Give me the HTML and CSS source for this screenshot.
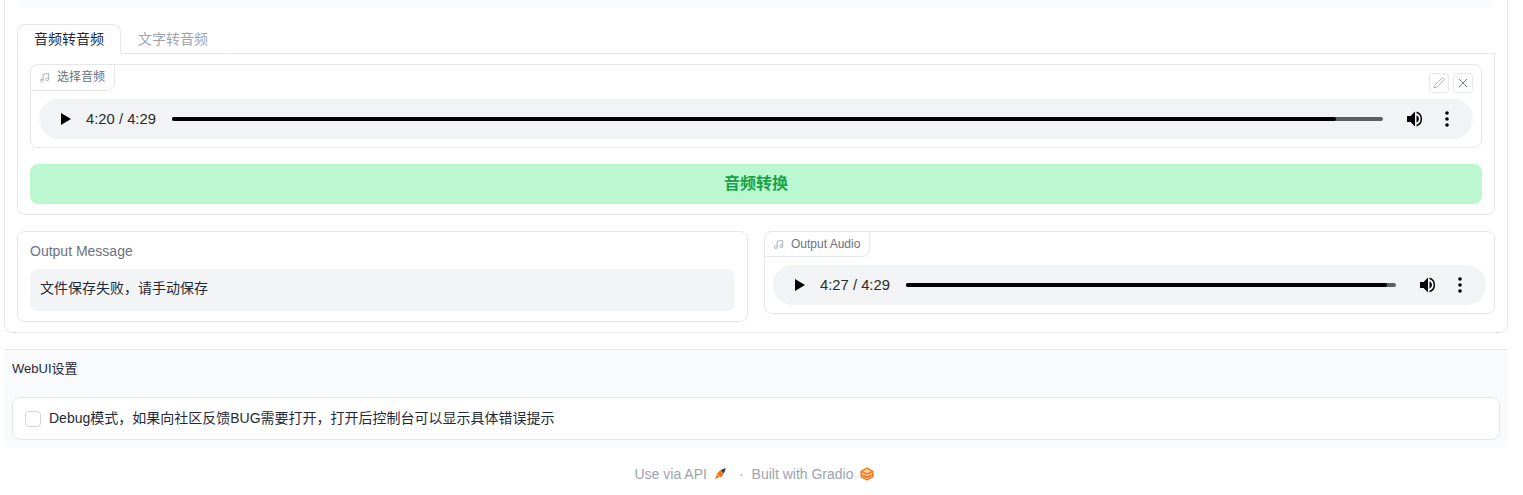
FILE: index.html
```html
<!DOCTYPE html>
<html lang="zh">
<head>
<meta charset="utf-8">
<title>WebUI</title>
<link rel="stylesheet" href="styles.css">
</head>
<body>
<svg class="defs" width="0" height="0" aria-hidden="true">
  <symbol id="music" viewBox="0 0 24 24"><path d="M9 18V5l12-2v13" fill="none" stroke="currentColor" stroke-width="1.8"/><circle cx="6" cy="18" r="3" fill="none" stroke="currentColor" stroke-width="1.8"/><circle cx="18" cy="16" r="3" fill="none" stroke="currentColor" stroke-width="1.8"/></symbol>
  <symbol id="play" viewBox="0 0 10 12"><path d="M0 0v12l10-6z" fill="#000"/></symbol>
  <symbol id="vol" viewBox="0 0 18 18"><path d="M1 6v6h3.600L9 16.400V1.600L4.600 6z" fill="#000"/><path d="M10.500 5.300v7.400A4.200 4.200 0 0 0 13 9a4.200 4.200 0 0 0-2.500-3.700z" fill="#000"/><path d="M10.500 1.600v1.700a6 6 0 0 1 0 11.400v1.700a7.700 7.700 0 0 0 0-14.800z" fill="#000"/></symbol>
  <symbol id="more" viewBox="0 0 4 16"><circle cx="2" cy="2" r="1.800" fill="#000"/><circle cx="2" cy="8" r="1.800" fill="#000"/><circle cx="2" cy="14" r="1.800" fill="#000"/></symbol>
</svg>

<main class="outer">
  <div class="top-strip"></div>
  <div class="tabs">
    <button class="tab active">音频转音频</button>
    <button class="tab">文字转音频</button>
    <div class="tab-rest"></div>
  </div>
  <section class="tab-panel">
    <div class="audio-block">
      <div class="label-row">
        <span class="tag tag-in"><svg class="tag-icon"><use href="#music"/></svg><span class="cjk-up">选择音频</span></span>
        <div class="tools">
          <span class="tool"><svg viewBox="0 0 24 24" class="tool-icon"><path d="M17 3a2.800 2.800 0 0 1 4 4L7.500 20.500 2 22l1.500-5.500z" fill="none" stroke="#9ca3af" stroke-width="1.600"/></svg></span>
          <span class="tool"><svg viewBox="0 0 24 24" class="tool-icon"><path d="M4 4l16 16M20 4L4 20" fill="none" stroke="#6b7280" stroke-width="1.800"/></svg></span>
        </div>
      </div>
      <div class="player player-a">
        <svg class="p-play"><use href="#play"/></svg>
        <span class="p-time">4:20 / 4:29</span>
        <div class="p-track"><div class="p-fill fill-a"></div></div>
        <svg class="p-vol"><use href="#vol"/></svg>
        <svg class="p-more"><use href="#more"/></svg>
      </div>
    </div>
    <button class="convert">音频转换</button>
  </section>

  <div class="output-row">
    <div class="card card-msg">
      <div class="card-label">Output Message</div>
      <div class="msg">文件保存失败，请手动保存</div>
    </div>
    <div class="card card-audio">
      <span class="tag tag-out"><svg class="tag-icon"><use href="#music"/></svg>Output Audio</span>
      <div class="player player-b">
        <svg class="p-play"><use href="#play"/></svg>
        <span class="p-time">4:27 / 4:29</span>
        <div class="p-track"><div class="p-fill fill-b"></div></div>
        <svg class="p-vol"><use href="#vol"/></svg>
        <svg class="p-more"><use href="#more"/></svg>
      </div>
    </div>
  </div>
</main>

<section class="settings">
  <div class="settings-title">WebUI设置</div>
  <label class="check-row"><span class="checkbox"></span><span class="check-text">Debug模式，如果向社区反馈BUG需要打开，打开后控制台可以显示具体错误提示</span></label>
</section>

<footer class="footer">
  <span>Use via API</span>
  <svg class="rocket" viewBox="0 0 12 12"><path d="M6 2.200 9.800 6 6.500 9.500 2.800 6z" fill="#f97316"/><path d="M3 6.500 5.500 9 .8 11.200z" fill="#f97316"/><path d="M6.500 2.500C8 1.200 10 .5 11.700.3 11.500 2 10.800 4 9.500 5.500z" fill="#374151"/></svg>
  <span class="dot">·</span>
  <span>Built with Gradio</span>
  <svg class="logo" viewBox="0 0 14 14"><path d="M7 1.200 12.800 4.300V9.700L7 12.800 1.200 9.700V4.300z" fill="#fed7aa" stroke="#f97316" stroke-width="1.500" stroke-linejoin="round"/><path d="M2 4.600 7 7.200l5-2.600M2.500 8 7 10.300 11.500 8" fill="none" stroke="#f97316" stroke-width="1.600"/></svg>
</footer>
</body>
</html>
```

FILE: styles.css
```css
* { box-sizing: border-box; }
html, body { margin: 0; padding: 0; background: #fff; }
body {
  width: 1523px;
  height: 495px;
  overflow: hidden;
  padding: 0 15px 0 4px;
  font-family: "Liberation Sans", "Noto Sans CJK SC", sans-serif;
  font-size: 14px;
  color: #1f2937;
}
.defs { position: absolute; }

.outer {
  height: 333px;
  padding: 0 12px;
  border: 1px solid #e5e7eb;
  border-top: 0;
  border-radius: 0 0 8px 8px;
}
.top-strip {
  height: 8px;
  background: #f9fafb;
  border-radius: 0 0 8px 8px;
  margin-bottom: 16px;
}

.tabs { display: flex; height: 30px; }
.tab {
  height: 30px;
  padding: 0 16px 2px;
  border: 1px solid transparent;
  border-bottom: 1px solid #e5e7eb;
  border-radius: 8px 8px 0 0;
  background: none;
  font: inherit;
  font-size: 14px;
  color: #a1a5ab;
}
.tab.active {
  color: #1f2937;
  border-color: #e5e7eb;
  border-bottom-color: #fff;
}
.tab-rest { flex: 1; border-bottom: 1px solid #e5e7eb; }

.tab-panel {
  height: 162px;
  margin-top: -1px;
  padding: 11px 12px 0;
  border: 1px solid #e5e7eb;
  border-top: 0;
  border-radius: 0 0 8px 8px;
}
.audio-block {
  height: 84px;
  border: 1px solid #e5e7eb;
  border-radius: 8px;
}
.label-row { display: flex; justify-content: space-between; height: 34px; }
.tag {
  display: inline-flex;
  align-items: center;
  height: 27px;
  margin: -1px 0 0 -1px;
  padding: 0 8px;
  border: 1px solid #e5e7eb;
  border-radius: 8px 0 8px 0;
  background: #fff;
  font-size: 12px;
  color: #6b7280;
  align-self: flex-start;
}
.tag-in { width: 85px; }
.cjk-up { padding-bottom: 4px; }
.tag-icon { width: 11px; height: 11px; margin-right: 7px; color: #9ca3af; }
.tools { display: flex; gap: 4px; padding: 8px 8px 0 0; }
.tool {
  display: flex;
  align-items: center;
  justify-content: center;
  width: 20px;
  height: 20px;
  border: 1px solid #e5e7eb;
  border-radius: 4px;
  background: #fff;
}
.tool-icon { width: 12px; height: 12px; }

.player {
  display: flex;
  align-items: center;
  height: 40px;
  border-radius: 20px;
  background: #f1f3f4;
  font-family: "Liberation Sans", sans-serif;
  color: #2b2b2b;
}
.player-a { margin: 0 8px; }
.player-b { margin: 8px 8px 0; }
.p-play { width: 10px; height: 12px; margin-left: 22px; flex: none; }
.p-time { margin-left: 15px; font-size: 14.8px; white-space: nowrap; width: 70px; flex: none; }
.p-track {
  flex: 1;
  height: 4px;
  margin-left: 16px;
  border-radius: 2px;
  background: #5f5f5f;
}
.p-fill { height: 4px; border-radius: 2px; background: #000; }
.fill-a { width: 96.1%; }
.fill-b { width: 98.100%; }
.p-vol { width: 18px; height: 18px; margin-left: 23px; flex: none; }
.p-more { width: 4px; height: 16px; margin: 0 24px 0 21px; flex: none; }

.convert {
  display: block;
  width: 100%;
  height: 40px;
  margin-top: 16px;
  padding: 0 0 4px;
  border: 0;
  border-radius: 8px;
  background: #bbf7d0;
  color: #16a34a;
  font: bold 16px "Liberation Sans", "Noto Sans CJK SC", sans-serif;
}

.output-row {
  display: grid;
  grid-template-columns: 1fr 1fr;
  align-items: start;
  gap: 16px;
  margin-top: 16px;
}
.card {
  min-width: 0;
  border: 1px solid #e5e7eb;
  border-radius: 8px;
}
.card-msg { height: 91px; padding: 11px 12px 0; }
.card-audio { height: 83px; }
.card-label { font-size: 14px; line-height: 16px; color: #6b7280; margin-bottom: 10px; }
.msg {
  height: 42px;
  padding: 0 10px;
  border-radius: 8px;
  background: #f3f4f6;
  line-height: 38px;
  font-size: 14px;
  color: #1f2937;
}
.tag-out { display: flex; width: 106px; height: 26px; }

.settings {
  height: 99px;
  margin-top: 16px;
  padding: 0 8px;
  border-top: 1px solid #e5e7eb;
  border-radius: 0 0 8px 8px;
  background: #f9fafb;
}
.settings-title { padding-top: 10px; height: 47px; font-size: 13px; line-height: 17px; color: #1f2937; }
.check-row {
  display: flex;
  align-items: center;
  height: 43px;
  padding: 0 12px;
  border: 1px solid #e5e7eb;
  border-radius: 8px;
  background: #fff;
  font-size: 14px;
  color: #1f2937;
}
.check-text { padding-bottom: 3px; }
.checkbox {
  width: 16px;
  height: 16px;
  margin-right: 8px;
  border: 1px solid #d1d5db;
  border-radius: 4px;
  background: #fff;
}

.footer {
  display: flex;
  align-items: center;
  justify-content: center;
  height: 24px;
  margin-top: 14px;
  padding-right: 3px;
  font-size: 14px;
  color: #9ca3af;
}
.rocket { width: 12px; height: 12px; margin-left: 7px; }
.dot { margin: 0 8px 0 13px; }
.logo { width: 14px; height: 14px; margin-left: 7px; }
```
